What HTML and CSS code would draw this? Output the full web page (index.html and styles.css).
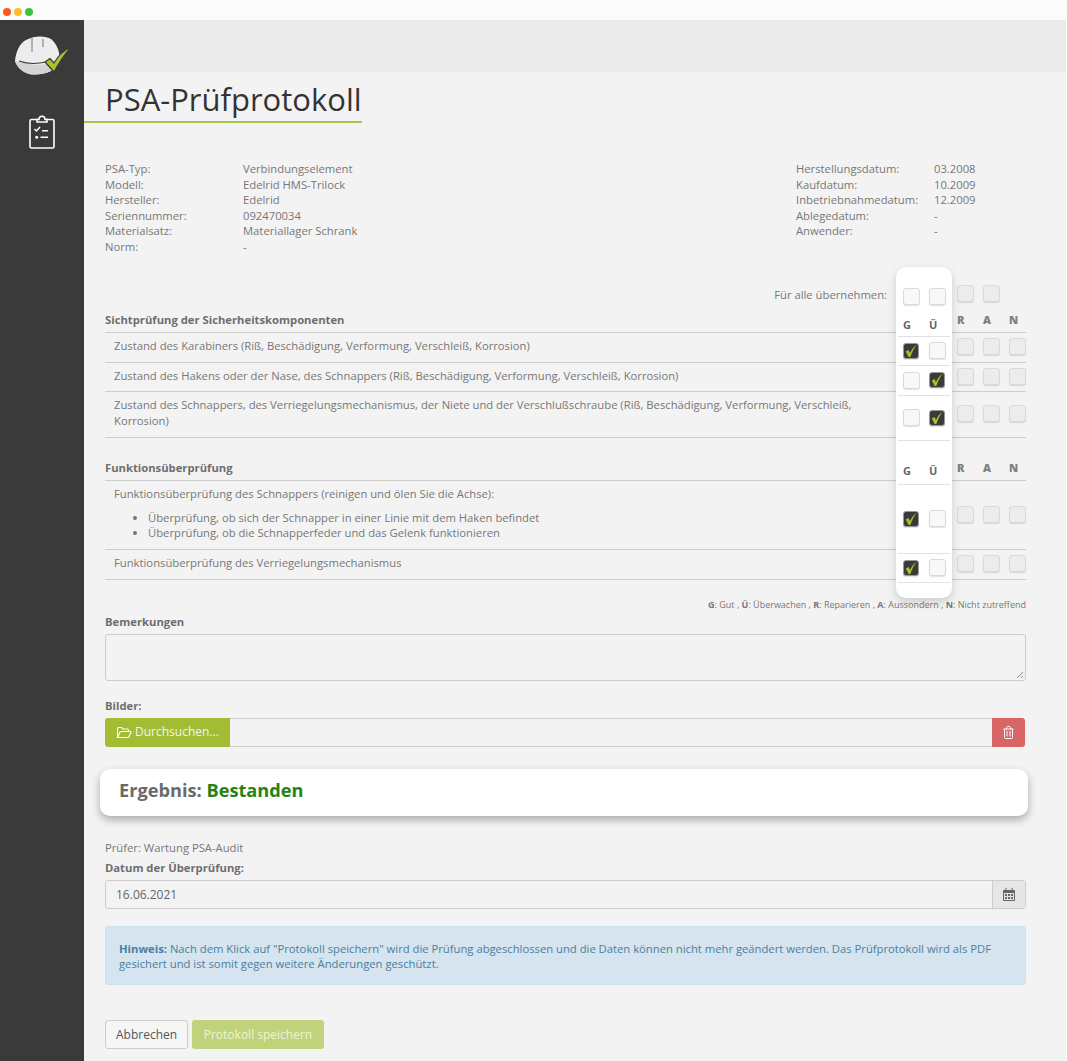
FILE: index.html
```html
<!DOCTYPE html>
<html lang="de">
<head>
    <meta charset="UTF-8">
    <meta name="viewport" content="width=device-width, initial-scale=1.0">
    <title>PSA-Prüfprotokoll</title>
    <link rel="stylesheet" href="styles.css">
</head>
<body>
    <svg class="defs" width="0" height="0">
        <symbol id="haken" viewBox="0 0 16 16">
            <path d="M2.800 8.500 L5.500 7 L7 10 C8.500 6.800 10.500 4 13.500 1.800 C11 5.500 8.800 9.500 7.300 14 L5.600 14 Z" fill="#a6c32c"/>
        </symbol>
    </svg>

    <div class="fensterleiste">
        <span class="punkt rot"></span>
        <span class="punkt gelb"></span>
        <span class="punkt gruen"></span>
    </div>

    <div class="app">
        <nav class="sidebar">
            <svg class="logo" width="60" height="42" viewBox="-1 0 60 42">
                <path d="M2 26 C3 16 7 8 13 5 C22 0 33 1 38 4 C44 9 47 17 47 26 L40 35 C30 40 22 40 16 39 C9 37 4 32 2 26 Z" fill="#ededed"/>
                <path d="M2 26 C4 32 9 37 16 39 C22 40 30 40 38 36 L40 28 C28 31 14 30 2 26 Z" fill="#d4d4d4"/>
                <path d="M19 3 L19 17 M30 4 L30 12" stroke="#777" stroke-width="1" fill="none"/>
                <path d="M6 26 C14 29 24 29 33 27" stroke="#3a3a3a" stroke-width="1.2" fill="none"/>
                <path d="M32 27 L37 23.500 L41 28 C45 21 51 15 58 12 C52 19 46 28 41 37 Z" fill="#a6c32c" stroke="#3a3a3a" stroke-width="1.2" stroke-linejoin="round"/>
            </svg>
            <svg class="menu-icon" width="28" height="36" viewBox="0 0 28 36" fill="none" stroke="#fff">
                <rect x="2" y="5.500" width="24" height="28.500" rx="1.500" stroke-width="1.600"/>
                <path d="M9 5.500 H11 C11 1 17 1 17 5.500 H19 V8 H9 Z" stroke-width="1.500" fill="#3a3a3a"/>
                <path d="M6.500 15 L8.500 17 L12 13" stroke-width="1.500"/>
                <path d="M14 16.800 H20 M12.500 23.300 H20" stroke-width="1.500"/>
                <circle cx="8.700" cy="23.300" r="1.500" fill="#fff" stroke="none"/>
            </svg>
        </nav>

        <main class="inhalt">
            <div class="kopfband"></div>
            <h1 class="titel">PSA-Prüfprotokoll</h1>

            <div class="formular">
                <section class="stammdaten">
                    <dl class="daten links">
                        <dt>PSA-Typ:</dt><dd>Verbindungselement</dd>
                        <dt>Modell:</dt><dd>Edelrid HMS-Trilock</dd>
                        <dt>Hersteller:</dt><dd>Edelrid</dd>
                        <dt>Seriennummer:</dt><dd>092470034</dd>
                        <dt>Materialsatz:</dt><dd>Materiallager Schrank</dd>
                        <dt>Norm:</dt><dd>-</dd>
                    </dl>
                    <dl class="daten rechts">
                        <dt>Herstellungsdatum:</dt><dd>03.2008</dd>
                        <dt>Kaufdatum:</dt><dd>10.2009</dd>
                        <dt>Inbetriebnahmedatum:</dt><dd>12.2009</dd>
                        <dt>Ablegedatum:</dt><dd>-</dd>
                        <dt>Anwender:</dt><dd>-</dd>
                    </dl>
                </section>

                <section class="pruefung">
                    <div class="alle">
                        <span class="alle-text">Für alle übernehmen:</span>
                        <span class="box"></span>
                        <span class="box"></span>
                        <span class="box leer"></span>
                    </div>

                    <div class="kopfzeile erste">
                        <span>Sichtprüfung der Sicherheitskomponenten</span>
                        <div class="spalten"><b>R</b><b>A</b><b>N</b></div>
                    </div>
                    <div class="zeile">
                        <div class="zeile-text">Zustand des Karabiners (Riß, Beschädigung, Verformung, Verschleiß, Korrosion)</div>
                        <div class="spalten"><span class="box"></span><span class="box"></span><span class="box"></span></div>
                    </div>
                    <div class="zeile">
                        <div class="zeile-text">Zustand des Hakens oder der Nase, des Schnappers (Riß, Beschädigung, Verformung, Verschleiß, Korrosion)</div>
                        <div class="spalten"><span class="box"></span><span class="box"></span><span class="box"></span></div>
                    </div>
                    <div class="zeile">
                        <div class="zeile-text">Zustand des Schnappers, des Verriegelungsmechanismus, der Niete und der Verschlußschraube (Riß, Beschädigung, Verformung, Verschleiß, Korrosion)</div>
                        <div class="spalten"><span class="box"></span><span class="box"></span><span class="box"></span></div>
                    </div>

                    <div class="kopfzeile zweite">
                        <span>Funktionsüberprüfung</span>
                        <div class="spalten"><b>R</b><b>A</b><b>N</b></div>
                    </div>
                    <div class="zeile">
                        <div class="zeile-text">
                            Funktionsüberprüfung des Schnappers (reinigen und ölen Sie die Achse):
                            <ul>
                                <li>Überprüfung, ob sich der Schnapper in einer Linie mit dem Haken befindet</li>
                                <li>Überprüfung, ob die Schnapperfeder und das Gelenk funktionieren</li>
                            </ul>
                        </div>
                        <div class="spalten"><span class="box"></span><span class="box"></span><span class="box"></span></div>
                    </div>
                    <div class="zeile">
                        <div class="zeile-text">Funktionsüberprüfung des Verriegelungsmechanismus</div>
                        <div class="spalten"><span class="box"></span><span class="box"></span><span class="box"></span></div>
                    </div>

                    <div class="popup">
                        <div class="pop-zeile pop-alle"><span class="box hell"></span><span class="box hell"></span></div>
                        <div class="pop-zeile pop-kopf"><b>G</b><b>Ü</b></div>
                        <div class="pop-zeile pop-r1"><span class="box an"><svg width="16" height="16"><use href="#haken"/></svg></span><span class="box hell"></span></div>
                        <div class="pop-zeile pop-r2"><span class="box hell"></span><span class="box an"><svg width="16" height="16"><use href="#haken"/></svg></span></div>
                        <div class="pop-zeile pop-r3"><span class="box hell"></span><span class="box an"><svg width="16" height="16"><use href="#haken"/></svg></span></div>
                        <div class="pop-zeile pop-kopf2"><b>G</b><b>Ü</b></div>
                        <div class="pop-zeile pop-r4"><span class="box an"><svg width="16" height="16"><use href="#haken"/></svg></span><span class="box hell"></span></div>
                        <div class="pop-zeile pop-r5"><span class="box an"><svg width="16" height="16"><use href="#haken"/></svg></span><span class="box hell"></span></div>
                    </div>
                </section>

                <p class="legende"><b>G</b>: Gut , <b>Ü</b>: Überwachen , <b>R</b>: Reparieren , <b>A</b>: Aussondern , <b>N</b>: Nicht zutreffend</p>

                <label class="feld-titel bemerkung-titel">Bemerkungen</label>
                <div class="textfeld">
                    <svg class="griff" width="8" height="8" viewBox="0 0 8 8" stroke="#888" fill="none"><path d="M1 7 L7 1 M5 7 L7 5"/></svg>
                </div>

                <label class="feld-titel bilder-titel">Bilder:</label>
                <div class="datei">
                    <div class="btn-suchen">
                        <svg width="16" height="13" viewBox="0 0 16 13" fill="none" stroke="#fff" stroke-width="1.1">
                            <path d="M1.500 11 V2.500 C1.500 2 2 1.500 2.500 1.500 H5.500 L7 3 H11.500 C12 3 12.500 3.500 12.500 4 V5.500"/>
                            <path d="M1.500 11.500 L4 6 C4.200 5.600 4.500 5.500 5 5.500 H14.500 C15 5.500 15.200 6 15 6.400 L12.700 11 C12.500 11.400 12.200 11.500 11.800 11.500 Z"/>
                        </svg>
                        Durchsuchen...
                    </div>
                    <div class="datei-name"></div>
                    <div class="btn-loeschen">
                        <svg width="11" height="13" viewBox="0 0 11 13" fill="none" stroke="#fff" stroke-width="1">
                            <path d="M0.500 3 H10.500 M3.500 3 V1.500 C3.500 1 4 0.500 4.500 0.500 H6.500 C7 0.500 7.500 1 7.500 1.500 V3"/>
                            <path d="M1.500 3 V11.500 C1.500 12 2 12.500 2.500 12.500 H8.500 C9 12.500 9.500 12 9.500 11.500 V3"/>
                            <path d="M4 5 V10.500 M7 5 V10.500"/>
                        </svg>
                    </div>
                </div>

                <div class="ergebnis">Ergebnis: <span class="bestanden">Bestanden</span></div>

                <p class="pruefer">Prüfer: Wartung PSA-Audit</p>
                <label class="feld-titel datum-titel">Datum der Überprüfung:</label>
                <div class="datum">
                    <div class="datum-wert">16.06.2021</div>
                    <div class="datum-icon">
                        <svg width="12" height="13" viewBox="0 0 12 13" fill="#666">
                            <path d="M2.500 0 H3.500 V2 H8.500 V0 H9.500 V2 H11 C11.600 2 12 2.400 12 3 V12 C12 12.600 11.600 13 11 13 H1 C0.400 13 0 12.600 0 12 V3 C0 2.400 0.400 2 1 2 H2.500 Z"/>
                            <path d="M1 5 H11 V12 H1 Z" fill="#e6e6e6"/>
                            <path d="M2 6 H4 V8 H2 Z M5 6 H7 V8 H5 Z M8 6 H10 V8 H8 Z M2 9 H4 V11 H2 Z M5 9 H7 V11 H5 Z M8 9 H10 V11 H8 Z"/>
                        </svg>
                    </div>
                </div>

                <div class="hinweis"><b>Hinweis:</b> Nach dem Klick auf "Protokoll speichern" wird die Prüfung abgeschlossen und die Daten können nicht mehr geändert werden. Das Prüfprotokoll wird als PDF gesichert und ist somit gegen weitere Änderungen geschützt.</div>

                <div class="aktionen">
                    <button class="btn abbrechen">Abbrechen</button>
                    <button class="btn speichern">Protokoll speichern</button>
                </div>
            </div>
        </main>
    </div>
</body>
</html>
```

FILE: styles.css
```css
* {
    box-sizing: border-box;
}

body {
    margin: 0;
    font-family: "Open Sans", Arial, sans-serif;
    font-size: 11.25px;
    line-height: 15.6px;
    color: #777;
    background-color: #fff;
    height: 1061px;
    overflow: hidden;
}

.defs {
    position: absolute;
}

.fensterleiste {
    height: 20px;
    padding: 8px 0 0 3px;
    display: flex;
    gap: 3px;
    background-color: #fbfbfb;
}

.punkt {
    width: 8px;
    height: 8px;
    border-radius: 50%;
}

.rot { background-color: #fb5a1e; }
.gelb { background-color: #fdbb2d; }
.gruen { background-color: #3fc13f; }

.app {
    display: flex;
    height: 1041px;
    margin-right: 1px;
}

.sidebar {
    width: 84px;
    flex-shrink: 0;
    background-color: #3a3a3a;
    display: flex;
    flex-direction: column;
    align-items: center;
    padding-top: 15px;
}

.logo {
    margin-bottom: 37px;
}

.inhalt {
    flex: 1;
    background-color: #f3f3f3;
}

.kopfband {
    height: 52px;
    background-color: #ebebeb;
}

.titel {
    display: inline-block;
    margin: 0;
    padding: 5px 0 0 21px;
    height: 51px;
    font-size: 31px;
    line-height: 44px;
    font-weight: 400;
    color: #333;
    border-bottom: 2px solid #a6c34c;
}

.formular {
    width: 921px;
    margin-left: 21px;
}

.stammdaten {
    display: flex;
    justify-content: space-between;
    padding-top: 38px;
}

.daten {
    margin: 0;
    display: grid;
    grid-template-columns: 138px auto;
    align-content: start;
}

.daten dd {
    margin: 0;
}

.daten.rechts {
    width: 230px;
}

.pruefung {
    position: relative;
    margin-top: 30px;
}

.alle {
    display: flex;
    justify-content: flex-end;
    align-items: center;
    gap: 9px;
    height: 17px;
}

.alle-text {
    margin-right: 61px;
    position: relative;
    top: 2px;
}

.box {
    display: block;
    width: 17px;
    height: 17px;
    border: 1px solid #dadada;
    border-radius: 3px;
    background-color: #ececec;
    box-shadow: 0 1px 1px rgba(0, 0, 0, 0.12);
}

.box.leer {
    visibility: hidden;
}

.box.hell {
    background-color: #f8f8f8;
}

.box.an {
    width: 16px;
    height: 16px;
    margin: 0 1px 0 0;
    background-color: #3a3a3a;
    border-color: #999;
}

.box.an svg {
    display: block;
    margin: -1px;
}

.kopfzeile {
    display: flex;
    justify-content: space-between;
    align-items: flex-end;
    font-weight: 700;
    color: #6e6e6e;
    padding-bottom: 5px;
    border-bottom: 1px solid #ccc;
}

.kopfzeile.erste {
    margin-top: 10px;
}

.kopfzeile.zweite {
    margin-top: 22px;
}

.spalten {
    display: flex;
    gap: 9px;
    flex-shrink: 0;
    margin-bottom: 2px;
}

.kopfzeile .spalten {
    margin-bottom: 0;
}

.spalten b {
    width: 17px;
    font-size: 11px;
    color: #808080;
}

.zeile {
    display: flex;
    justify-content: space-between;
    align-items: center;
    border-bottom: 1px solid #ccc;
}

.zeile-text {
    width: 750px;
    padding: 5px 0 8px 9px;
}

.zeile ul {
    margin: 8px 0 0;
    padding-left: 34px;
}

.popup {
    position: absolute;
    left: 791px;
    top: -18px;
    width: 56px;
    height: 331px;
    padding: 0 2px;
    background-color: #fff;
    border-radius: 10px;
    box-shadow: 0 4px 10px rgba(0, 0, 0, 0.16);
}

.pop-zeile {
    display: flex;
    gap: 9px;
    padding-left: 5px;
    align-items: center;
    border-bottom: 1px solid #e2e2e2;
}

.pop-zeile b {
    width: 17px;
    font-size: 11px;
    color: #666;
}

.pop-alle { height: 48px; padding-top: 12px; border-bottom: 0; }
.pop-kopf { height: 22px; }
.pop-r1 { height: 29px; }
.pop-r2 { height: 30px; }
.pop-r3 { height: 45px; }
.pop-kopf2 { height: 44px; padding-top: 18px; }
.pop-r4 { height: 69px; }
.pop-r5 { height: 29px; }

.legende {
    margin: 19px 0 0;
    text-align: right;
    font-size: 9px;
    line-height: 12px;
}

.feld-titel {
    display: block;
    font-weight: 700;
    color: #6e6e6e;
}

.bemerkung-titel {
    margin-top: 3px;
}

.textfeld {
    position: relative;
    height: 47px;
    margin-top: 5px;
    border: 1px solid #ccc;
    border-radius: 3px;
}

.griff {
    position: absolute;
    right: 1px;
    bottom: 1px;
}

.bilder-titel {
    margin-top: 17px;
}

.datei {
    display: flex;
    height: 29px;
    margin: 4px 1px 0 0;
    font-size: 12px;
}

.btn-suchen {
    width: 125px;
    display: flex;
    align-items: center;
    gap: 3px;
    padding-left: 11px;
    color: #f3f3f3;
    background-color: #a2bd33;
    border-radius: 3px 0 0 3px;
}

.datei-name {
    flex: 1;
    border: 1px solid #ccc;
    border-left: 0;
    border-right: 0;
}

.btn-loeschen {
    width: 33px;
    display: flex;
    align-items: center;
    justify-content: center;
    background-color: #d96666;
    border-radius: 0 3px 3px 0;
}

.ergebnis {
    width: 928px;
    height: 47px;
    margin: 22px 0 0 -5px;
    padding-left: 19px;
    background-color: #fff;
    border-radius: 10px;
    font-size: 18.2px;
    line-height: 43px;
    font-weight: 700;
    color: #6a6a6a;
    box-shadow: 0 4px 8px rgba(0, 0, 0, 0.3);
}

.bestanden {
    color: #268213;
}

.pruefer {
    margin: 24px 0 0;
}

.datum-titel {
    margin-top: 5px;
}

.datum {
    display: flex;
    height: 29px;
    margin-top: 4px;
    border: 1px solid #ccc;
    border-radius: 3px;
    font-size: 12px;
}

.datum-wert {
    flex: 1;
    padding-left: 10px;
    line-height: 28px;
    color: #666;
}

.datum-icon {
    width: 33px;
    display: flex;
    align-items: center;
    justify-content: center;
    background-color: #e6e6e6;
    border-left: 1px solid #ccc;
}

.hinweis {
    height: 59px;
    margin-top: 17px;
    padding: 14px 13px 0;
    background-color: #d5e4ee;
    border: 1px solid #cfdfe9;
    border-radius: 3px;
    color: #4a7f9f;
}

.aktionen {
    display: flex;
    gap: 4px;
    margin-top: 35px;
}

.btn {
    height: 29px;
    padding: 0 10px;
    font-family: inherit;
    font-size: 12px;
    border-radius: 3px;
}

.abbrechen {
    width: 83px;
    color: #555;
    background-color: #f6f6f6;
    border: 1px solid #ccc;
}

.speichern {
    width: 132px;
    color: #eef2d8;
    background-color: #c1d37a;
    border: 0;
}
```
